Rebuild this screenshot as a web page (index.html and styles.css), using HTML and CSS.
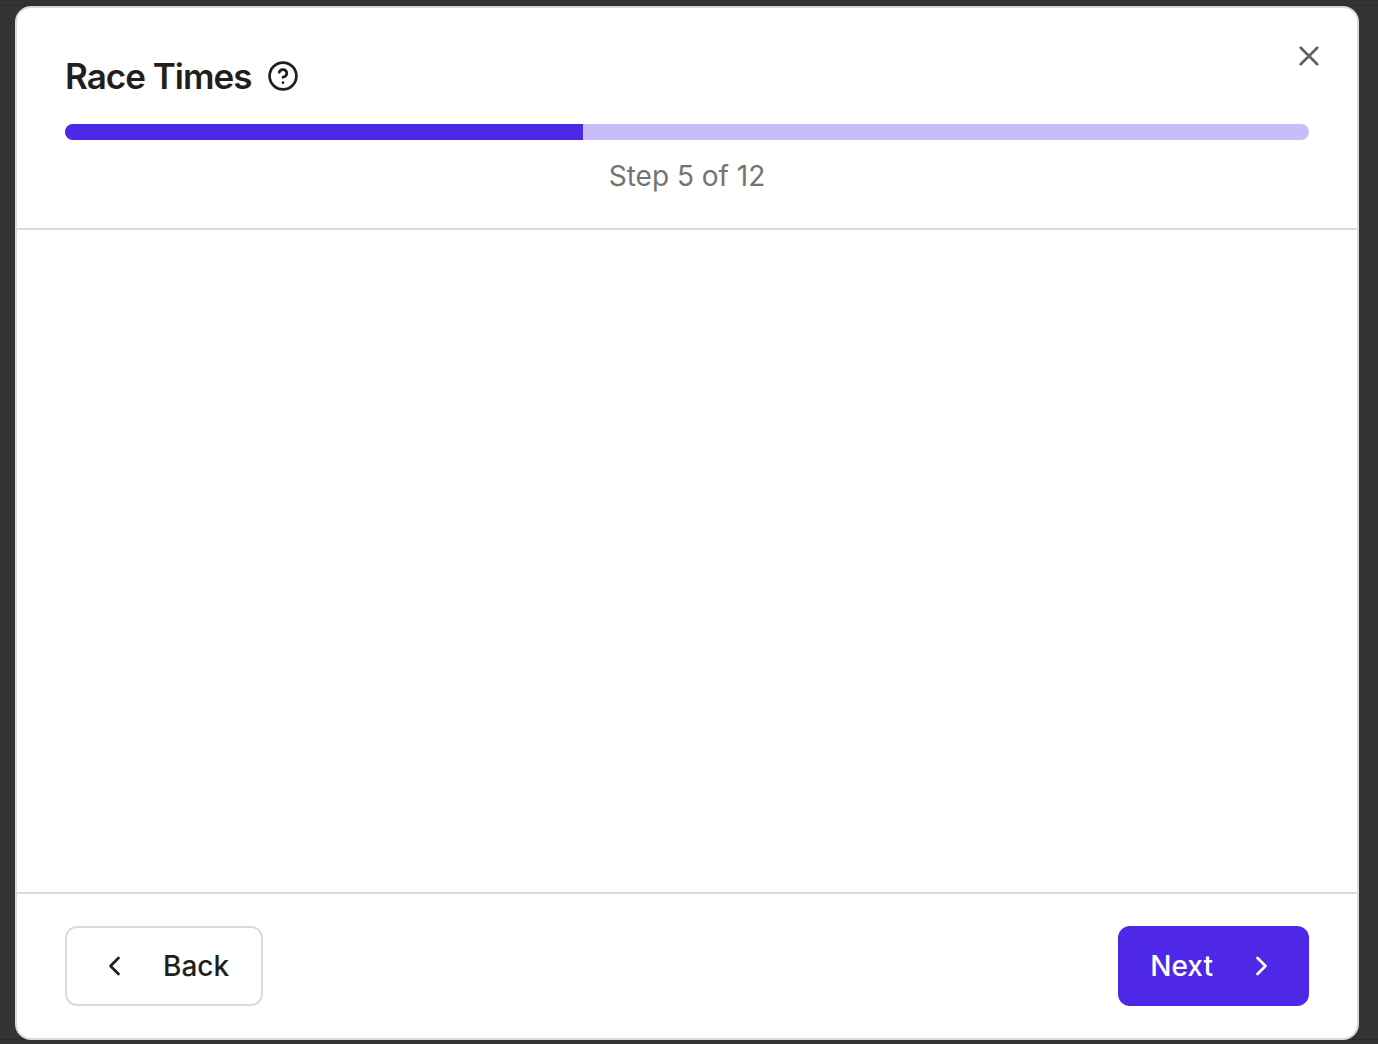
FILE: index.html
```html
<!DOCTYPE html>
<html lang="en">
<head>
<meta charset="utf-8">
<title>Race Times</title>
<link rel="stylesheet" href="styles.css">
</head>
<body>
<main class="dialog" role="dialog" aria-labelledby="dialog-title">
  <header class="dialog-header">
    <div class="title-row">
      <h1 class="title" id="dialog-title">Race Times</h1>
      <button class="icon-button" type="button" aria-label="Help">
        <svg class="help-icon" viewBox="0 0 32 32" aria-hidden="true"><circle cx="16" cy="16" r="13.4"/><path d="M12.2 12.3a3.9 3.9 0 0 1 7.6 1.2c0 2.5-3.8 3.8-3.8 3.8M16 22.7h.01"/></svg>
      </button>
    </div>
    <div class="progress" role="progressbar" aria-label="Progress" aria-valuenow="5" aria-valuemin="0" aria-valuemax="12"><div class="progress-fill" style="width: 41.667%"></div></div>
    <p class="step">Step 5 of 12</p>
    <button class="icon-button close" type="button" aria-label="Close">
      <svg class="close-icon" viewBox="0 0 32 32" aria-hidden="true"><path d="M7.7 7.7l16.6 16.6M24.3 7.7L7.7 24.3"/></svg>
    </button>
  </header>
  <section class="dialog-body"></section>
  <footer class="dialog-footer">
    <button class="button back" type="button">
      <svg class="chevron" viewBox="0 0 32 32" aria-hidden="true"><path d="M19.5 24l-8-8 8-8"/></svg>
      Back
    </button>
    <button class="button next" type="button">
      Next
      <svg class="chevron" viewBox="0 0 32 32" aria-hidden="true"><path d="M12.5 24l8-8-8-8"/></svg>
    </button>
  </footer>
</main>
</body>
</html>
```
FILE: styles.css
```css
* {
  box-sizing: border-box;
}

body {
  margin: 0;
  min-height: 100vh;
  display: flex;
  padding: 6px 19px 4px 15px;
  background:
    linear-gradient(#2a2a2a, #2a2a2a) 0 5px / 100% 1px no-repeat,
    linear-gradient(#2a2a2a, #2a2a2a) 0 calc(100% - 4px) / 100% 1px no-repeat,
    #333;
  color: #1f1f1f;
  font-family: Inter, "Liberation Sans", sans-serif;
}

.dialog {
  flex: 1;
  display: flex;
  flex-direction: column;
  background: #fff;
  border: 2px solid #dadada;
  border-radius: 16px;
}

.dialog-header {
  position: relative;
  padding: 48px 48px 32px;
  border-bottom: 2px solid #dadada;
}

.title-row {
  display: flex;
  align-items: center;
  gap: 16px;
  height: 40px;
}

.title {
  margin: 0;
  font-size: 35px;
  line-height: 40px;
  font-weight: 600;
  letter-spacing: -1px;
}

.icon-button {
  display: flex;
  padding: 0;
  border: 0;
  background: none;
  color: inherit;
}

svg {
  width: 32px;
  height: 32px;
  fill: none;
  stroke: currentColor;
  stroke-width: 2.7;
  stroke-linecap: round;
  stroke-linejoin: round;
}

.progress {
  height: 16px;
  margin-top: 28px;
  border-radius: 8px;
  overflow: hidden;
  background: #c8bdf8;
}

.progress-fill {
  height: 100%;
  background: #4f27e6;
}

.step {
  margin: 16px 0 0;
  color: #737373;
  font-size: 28px;
  line-height: 40px;
  text-align: center;
}

.close {
  position: absolute;
  top: 32px;
  right: 32px;
  color: #606060;
}

.dialog-body {
  flex: 1;
}

.dialog-footer {
  display: flex;
  justify-content: space-between;
  padding: 32px 48px;
  border-top: 2px solid #dadada;
}

.button {
  display: flex;
  align-items: center;
  height: 80px;
  padding: 0 32px;
  gap: 32px;
  border: 0;
  border-radius: 12px;
  font: 500 28px/40px Inter, "Liberation Sans", sans-serif;
}

.back {
  border: 2px solid #dadada;
  background: #fff;
  color: #1f1f1f;
}

.next {
  background: #4f27e6;
  color: #fff;
}
```
